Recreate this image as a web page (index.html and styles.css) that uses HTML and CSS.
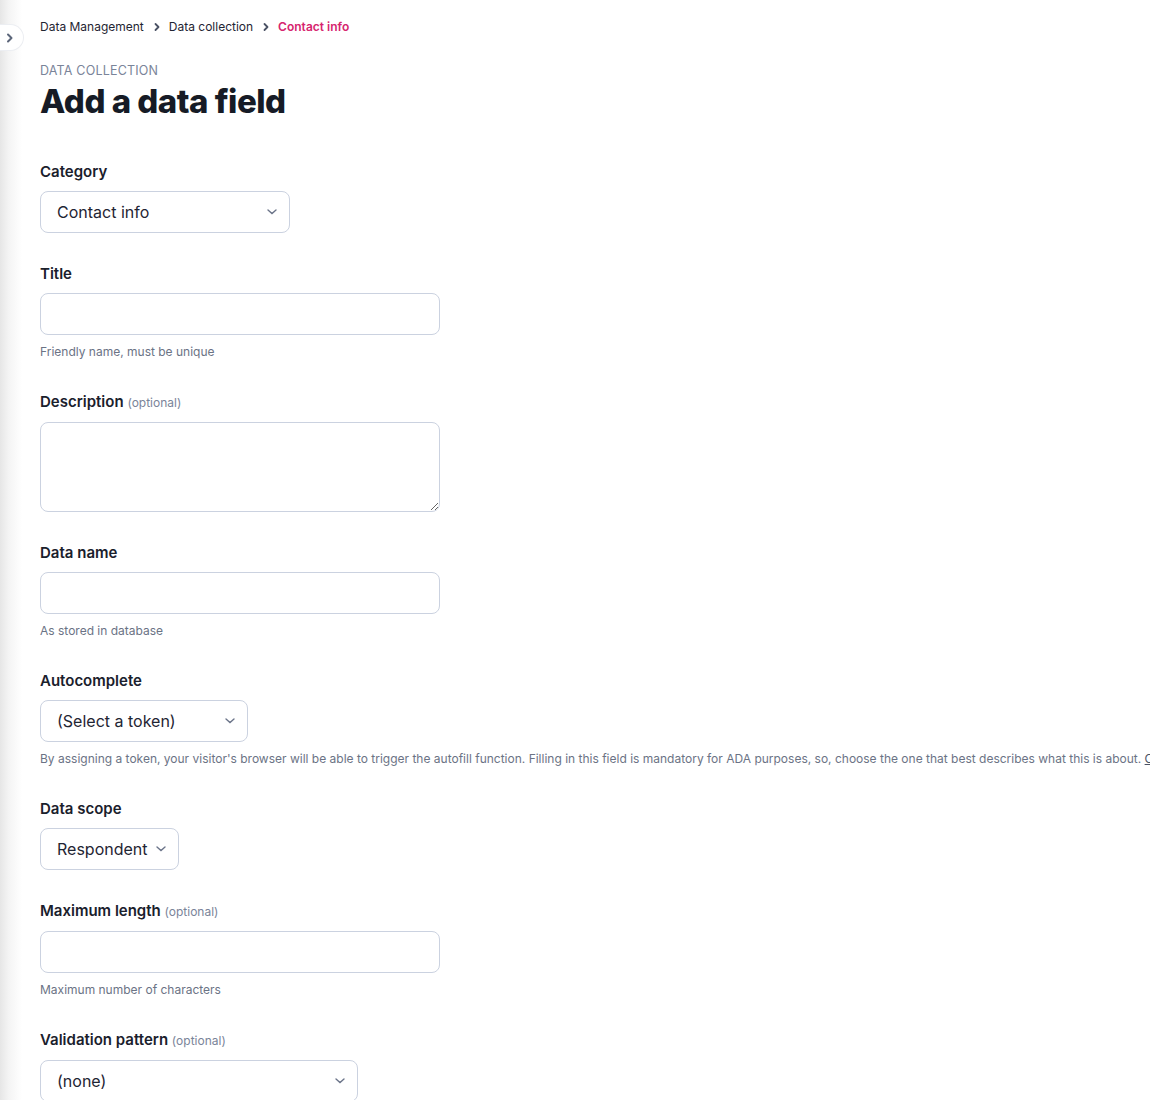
FILE: index.html
```html
<!DOCTYPE html>
<html>
<head>
  <title>Add a data field</title>
  <link rel="stylesheet" href="styles.css">
</head>
<body>
  <div class="layout">
    <aside class="sidebar">
      <button class="sidebar-toggle" type="button" aria-label="Expand sidebar">
        <svg width="8" height="10" viewBox="0 0 8 10"><path d="M2 1.5 5.5 5 2 8.5" fill="none" stroke="#5c667a" stroke-width="2" stroke-linecap="round" stroke-linejoin="round"/></svg>
      </button>
    </aside>

    <main class="main">
      <nav class="breadcrumb">
        <a href="#">Data Management</a>
        <svg class="crumb-sep" width="8" height="10" viewBox="0 0 8 10"><path d="M2.5 2 5.5 5 2.5 8" fill="none" stroke="#4a5264" stroke-width="1.8" stroke-linecap="round" stroke-linejoin="round"/></svg>
        <a href="#">Data collection</a>
        <svg class="crumb-sep" width="8" height="10" viewBox="0 0 8 10"><path d="M2.5 2 5.5 5 2.5 8" fill="none" stroke="#4a5264" stroke-width="1.8" stroke-linecap="round" stroke-linejoin="round"/></svg>
        <span class="current">Contact info</span>
      </nav>

      <div class="eyebrow">Data collection</div>
      <h1>Add a data field</h1>

      <form class="field-form">
        <div class="field">
          <label for="category">Category</label>
          <div class="select-wrap select-category">
            <select id="category"><option>Contact info</option></select>
            <svg class="chev" width="10" height="6" viewBox="0 0 10 6"><path d="M1 1 5 4.5 9 1" fill="none" stroke="#6b7489" stroke-width="1.4" stroke-linecap="round"/></svg>
          </div>
        </div>

        <div class="field">
          <label for="title">Title</label>
          <input type="text" id="title">
          <div class="help">Friendly name, must be unique</div>
        </div>

        <div class="field">
          <label for="description">Description <span class="optional">(optional)</span></label>
          <textarea id="description"></textarea>
        </div>

        <div class="field">
          <label for="dataname">Data name</label>
          <input type="text" id="dataname">
          <div class="help">As stored in database</div>
        </div>

        <div class="field">
          <label for="autocomplete">Autocomplete</label>
          <div class="select-wrap select-token">
            <select id="autocomplete"><option>(Select a token)</option></select>
            <svg class="chev" width="10" height="6" viewBox="0 0 10 6"><path d="M1 1 5 4.5 9 1" fill="none" stroke="#6b7489" stroke-width="1.4" stroke-linecap="round"/></svg>
          </div>
          <div class="help nowrap">By assigning a token, your visitor's browser will be able to trigger the autofill function. Filling in this field is mandatory for ADA purposes, so, choose the one that best describes what this is about. <a href="#">Click here to learn more</a></div>
        </div>

        <div class="field">
          <label for="scope">Data scope</label>
          <div class="select-wrap select-scope">
            <select id="scope"><option>Respondent</option></select>
            <svg class="chev" width="10" height="6" viewBox="0 0 10 6"><path d="M1 1 5 4.5 9 1" fill="none" stroke="#6b7489" stroke-width="1.4" stroke-linecap="round"/></svg>
          </div>
        </div>

        <div class="field">
          <label for="maxlen">Maximum length <span class="optional">(optional)</span></label>
          <input type="text" id="maxlen">
          <div class="help">Maximum number of characters</div>
        </div>

        <div class="field">
          <label for="pattern">Validation pattern <span class="optional">(optional)</span></label>
          <div class="select-wrap select-pattern">
            <select id="pattern"><option>(none)</option></select>
            <svg class="chev" width="10" height="6" viewBox="0 0 10 6"><path d="M1 1 5 4.5 9 1" fill="none" stroke="#6b7489" stroke-width="1.4" stroke-linecap="round"/></svg>
          </div>
        </div>
      </form>
    </main>
  </div>
</body>
</html>
```

FILE: styles.css
```css
html, body { margin: 0; padding: 0; }
body { font-family: Inter, "Noto Sans", Arial, sans-serif; color: #1a202c; background: #fff; overflow: hidden; }

.layout { display: flex; min-height: 1100px; }
.sidebar { position: relative; width: 22px; flex-shrink: 0; background: linear-gradient(to right, #e6e6e6 0%, #f4f4f4 40%, #fff 100%); }
.sidebar-toggle { position: absolute; top: 24px; left: 0; width: 24px; height: 27px; border: 1px solid #eceef2; border-left: none; border-radius: 0 14px 14px 0; background: #fff; display: flex; align-items: center; justify-content: flex-start; padding: 0 0 0 6px; cursor: pointer; }

.main { padding: 18px 0 0 18px; min-width: 0; }

.breadcrumb { display: flex; align-items: center; font-size: 12px; line-height: 18px; white-space: nowrap; }
.breadcrumb a { color: #1f2533; text-decoration: none; }
.crumb-sep { margin: 0 8px 0 9px; }
.breadcrumb .current { color: #d6246e; font-weight: 600; }

.eyebrow { margin-top: 26px; font-size: 12.5px; line-height: 18px; text-transform: uppercase; letter-spacing: 0.2px; color: #7a8499; }
h1 { margin: 1px 0 0; font-size: 33px; line-height: 40px; font-weight: 800; letter-spacing: -0.5px; color: #161b26; }

.field-form { margin-top: 41px; }
.field { margin-bottom: 31px; }
.field label { display: block; font-size: 15px; line-height: 20px; font-weight: 600; color: #1a202c; margin-bottom: 9px; }
.optional { font-size: 12px; font-weight: 400; color: #7a8499; }

input, textarea, select { font-family: inherit; font-size: 16px; color: #1f2533; border: 1px solid #cbd2e0; border-radius: 8px; background: #fff; box-sizing: border-box; }
input { display: block; width: 400px; height: 42px; padding: 0 16px; }
textarea { display: block; width: 400px; height: 90px; padding: 10px 16px; }

.select-wrap { position: relative; height: 42px; }
.select-wrap select { appearance: none; -webkit-appearance: none; width: 100%; height: 42px; padding: 0 28px 0 16px; }
.chev { position: absolute; top: 18px; right: 13px; pointer-events: none; }
.select-category { width: 250px; }
.select-token { width: 208px; }
.select-scope { width: 139px; }
.select-pattern { width: 318px; }

.help { margin-top: 7px; font-size: 12px; line-height: 19px; color: #6b7385; }
.help.nowrap { white-space: nowrap; }
.help a { color: #4a5264; }
```
